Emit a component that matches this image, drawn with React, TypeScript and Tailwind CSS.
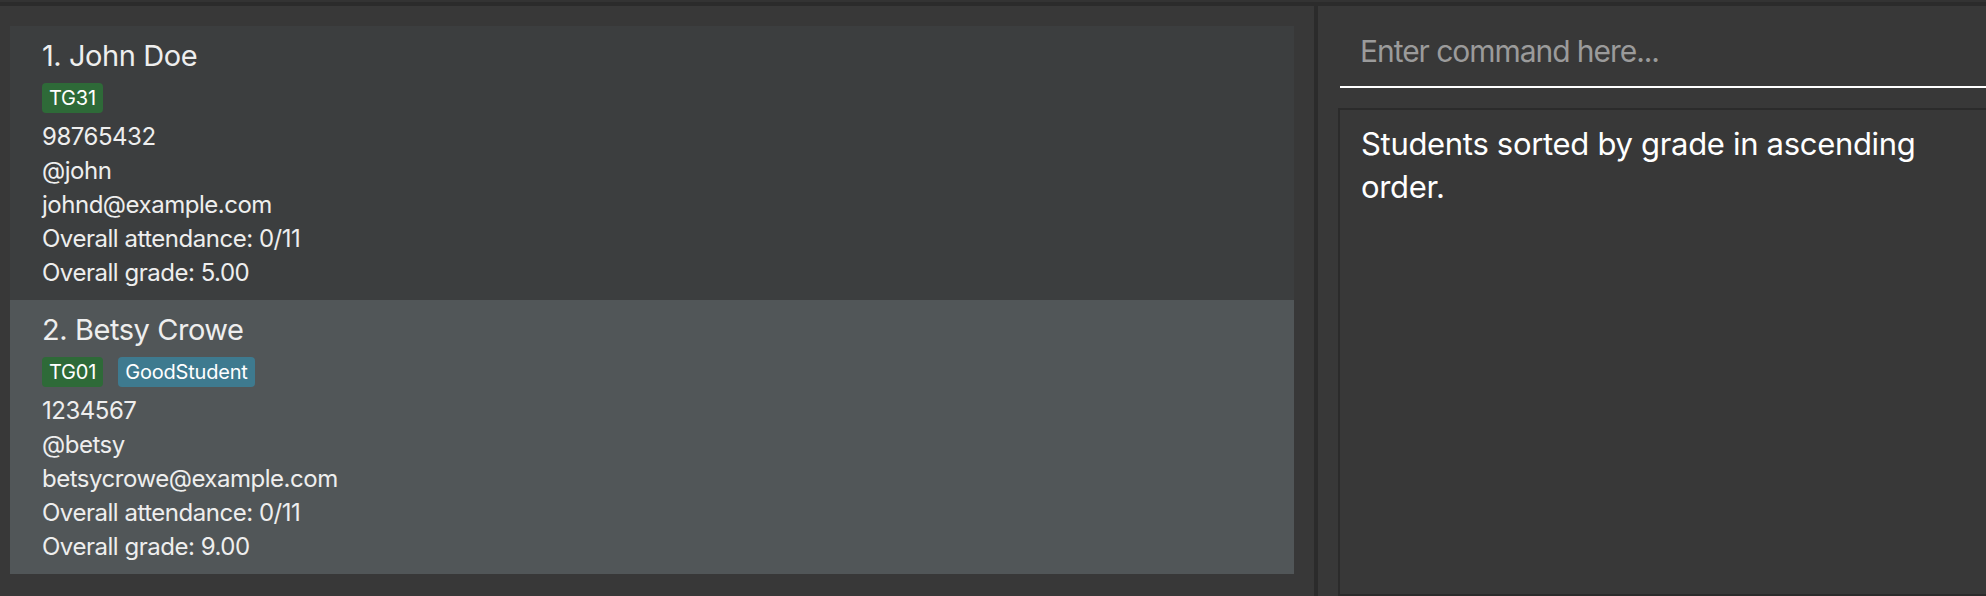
const students = [
  {
    name: "1. John Doe",
    tags: [{ label: "TG31", kind: "group" }],
    phone: "98765432",
    handle: "@john",
    email: "johnd@example.com",
    attendance: "0/11",
    grade: "5.00",
  },
  {
    name: "2. Betsy Crowe",
    tags: [
      { label: "TG01", kind: "group" },
      { label: "GoodStudent", kind: "tag" },
    ],
    phone: "1234567",
    handle: "@betsy",
    email: "betsycrowe@example.com",
    attendance: "0/11",
    grade: "9.00",
  },
];

function StudentCard({ student, index }: { student: (typeof students)[number]; index: number }) {
  return (
    <div className={index % 2 === 0 ? "bg-[#3c3e3f] pt-[12px] pb-[10px] pl-[32px]" : "bg-[#515658] pt-[12px] pb-[10px] pl-[32px]"}>
      <div className="text-[29px] leading-[36px] tracking-[-0.015em] text-[#eeeeee]">{student.name}</div>
      <div className="mt-[9px] flex gap-[15px]">
        {student.tags.map((tag) => (
          <span
            key={tag.label}
            className={
              tag.kind === "group"
                ? "flex h-[30px] items-center rounded-[4px] bg-[#2e6a38] px-[7px] text-[20px] leading-none tracking-[-0.01em] text-white"
                : "flex h-[30px] items-center rounded-[4px] bg-[#3e7a8f] px-[7px] text-[20px] leading-none tracking-[-0.01em] text-white"
            }
          >
            {tag.label}
          </span>
        ))}
      </div>
      <div className="mt-[7px] text-[24px] leading-[34px] tracking-[-0.02em] text-[#eeeeee]">
        <div>{student.phone}</div>
        <div>{student.handle}</div>
        <div>{student.email}</div>
        <div>Overall attendance: {student.attendance}</div>
        <div>Overall grade: {student.grade}</div>
      </div>
    </div>
  );
}

export default function App() {
  return (
    <div className="flex h-[596px] w-full flex-col overflow-hidden bg-[#383838] font-['Inter','Noto_Sans',sans-serif]">
      <div className="h-[2px] bg-[#333333]" />
      <div className="h-[4px] bg-[#2b2b2b]" />
      <div className="flex min-h-0 flex-1">
        {/* student list */}
        <div className="w-[1314px] shrink-0 pt-[20px] pr-[20px] pl-[10px]">
          {students.map((s, i) => (
            <StudentCard key={s.name} student={s} index={i} />
          ))}
        </div>
        <div className="w-[4px] shrink-0 bg-[#2b2b2b]" />
        {/* command + result */}
        <div className="flex min-w-0 flex-1 flex-col overflow-hidden pl-[20px]">
          <input
            type="text"
            placeholder="Enter command here..."
            className="ml-[2px] h-[82px] shrink-0 border-b-2 border-white bg-transparent pt-[10px] pl-[20px] text-[30px] tracking-[-0.035em] text-white outline-none placeholder:text-[#9b9b9b]"
          />
          <div className="mt-[20px] -mr-[20px] flex-1 border-2 border-[#2b2b2b] bg-[#383838] pt-[12px] pl-[21px] text-[31px] leading-[43px] tracking-[-0.01em] text-white">
            <p className="w-[600px]">Students sorted by grade in ascending order.</p>
          </div>
        </div>
      </div>
    </div>
  );
}
